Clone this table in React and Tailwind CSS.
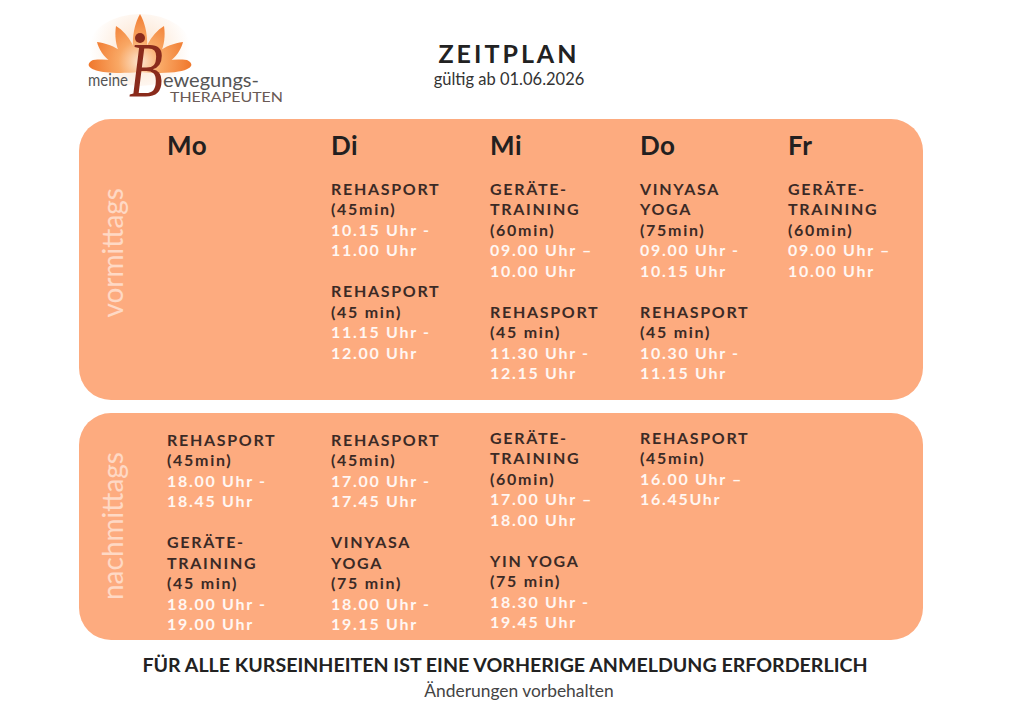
import React from "react";

const morning = [
  { day: "Mo", blocks: [] },
  {
    day: "Di",
    blocks: [
      { t: ["REHASPORT", "(45min)"], h: ["10.15 Uhr -", "11.00 Uhr"] },
      { t: ["REHASPORT", "(45 min)"], h: ["11.15 Uhr -", "12.00 Uhr"] },
    ],
  },
  {
    day: "Mi",
    blocks: [
      { t: ["GERÄTE-", "TRAINING", "(60min)"], h: ["09.00 Uhr –", "10.00 Uhr"] },
      { t: ["REHASPORT", "(45 min)"], h: ["11.30 Uhr -", "12.15 Uhr"] },
    ],
  },
  {
    day: "Do",
    blocks: [
      { t: ["VINYASA", "YOGA", "(75min)"], h: ["09.00 Uhr -", "10.15 Uhr"] },
      { t: ["REHASPORT", "(45 min)"], h: ["10.30 Uhr -", "11.15 Uhr"] },
    ],
  },
  {
    day: "Fr",
    blocks: [{ t: ["GERÄTE-", "TRAINING", "(60min)"], h: ["09.00 Uhr –", "10.00 Uhr"] }],
  },
];

const afternoon = [
  {
    day: "Mo",
    blocks: [
      { t: ["REHASPORT", "(45min)"], h: ["18.00 Uhr -", "18.45 Uhr"] },
      { t: ["GERÄTE-", "TRAINING", "(45 min)"], h: ["18.00 Uhr -", "19.00 Uhr"] },
    ],
  },
  {
    day: "Di",
    blocks: [
      { t: ["REHASPORT", "(45min)"], h: ["17.00 Uhr -", "17.45 Uhr"] },
      { t: ["VINYASA", "YOGA", "(75 min)"], h: ["18.00 Uhr -", "19.15 Uhr"] },
    ],
  },
  {
    day: "Mi",
    up: true,
    blocks: [
      { t: ["GERÄTE-", "TRAINING", "(60min)"], h: ["17.00 Uhr –", "18.00 Uhr"] },
      { t: ["YIN YOGA", "(75 min)"], h: ["18.30 Uhr -", "19.45 Uhr"] },
    ],
  },
  {
    day: "Do",
    up: true,
    blocks: [{ t: ["REHASPORT", "(45min)"], h: ["16.00 Uhr –", "16.45Uhr"] }],
  },
  { day: "Fr", blocks: [] },
];

const Logo = () => (
  <svg width="205" height="96" viewBox="0 0 205 96" className="ml-[85px] mt-[10px]">
    <defs>
      <radialGradient id="lotus" cx="55" cy="52" r="54" gradientUnits="userSpaceOnUse">
        <stop offset="0" stopColor="#fde6d0" />
        <stop offset="0.4" stopColor="#f9a865" />
        <stop offset="1" stopColor="#ef7327" />
      </radialGradient>
      <radialGradient id="glow" cx="55" cy="40" r="50" gradientUnits="userSpaceOnUse">
        <stop offset="0" stopColor="#fbd3b0" stopOpacity="0.7" />
        <stop offset="1" stopColor="#fbd3b0" stopOpacity="0" />
      </radialGradient>
    </defs>
    <ellipse cx="55" cy="40" rx="52" ry="36" fill="url(#glow)" />
    <g fill="url(#lotus)">
      <path d="M55,62 C8,66 -4,56 8,50 C26,48 44,52 55,62Z" />
      <path d="M55,62 C102,66 114,56 102,50 C84,48 66,52 55,62Z" />
      <path d="M55,62 C32,60 16,48 12,32 C30,34 46,46 55,62Z" />
      <path d="M55,62 C78,60 94,48 98,32 C80,34 64,46 55,62Z" />
      <path d="M55,62 C36,54 28,36 31,16 C44,24 53,40 55,62Z" />
      <path d="M55,62 C74,54 82,36 79,16 C66,24 57,40 55,62Z" />
      <path d="M55,62 C45,44 46,20 55,4 C64,20 65,44 55,62Z" />
    </g>
    <circle cx="55" cy="28" r="5" fill="#8a2b1c" />
    <text x="3" y="76" fontSize="17" fill="#555" fontFamily="Lato, sans-serif" textLength="40" lengthAdjust="spacingAndGlyphs">
      meine
    </text>
    <text x="44" y="86" fontSize="78" fill="#8a2b1c" fontStyle="italic" fontFamily="'Liberation Serif', serif" textLength="34" lengthAdjust="spacingAndGlyphs">
      B
    </text>
    <text x="78" y="77" fontSize="19" fill="#555" fontFamily="Lato, sans-serif" textLength="96" lengthAdjust="spacingAndGlyphs">
      ewegungs-
    </text>
    <text x="85" y="92" fontSize="13" fill="#6a5a55" fontFamily="Lato, sans-serif" textLength="113" lengthAdjust="spacingAndGlyphs">
      THERAPEUTEN
    </text>
  </svg>
);

const Block = ({ b, first }) => (
  <div className={first ? "" : "mt-[20.5px]"}>
    {b.t.map((l) => (
      <div key={l} className="text-[#3b2a26]">
        {l}
      </div>
    ))}
    {b.h.map((l) => (
      <div key={l} className="text-white/90">
        {l}
      </div>
    ))}
  </div>
);

const Panel = ({ label, cols, heads, className, labelClass }) => (
  <div className={"flex rounded-[32px] bg-[#fdab7f] ml-[79px] w-[844px] " + className}>
    <div className={"w-[66px] flex items-center justify-center " + labelClass}>
      <span className="[writing-mode:vertical-rl] rotate-180 text-[28px] text-white/55 leading-none">
        {label}
      </span>
    </div>
    <div className="ml-[22px] grid grid-cols-[164px_159px_150px_148px_1fr]">
      {cols.map((c) => (
        <div key={c.day} className={c.up ? "-mt-[2px]" : ""}>
          {heads && (
            <div className="text-[26px] leading-[30px] font-bold text-[#231f20] tracking-[0.5px] mb-[18.5px]">
              {c.day}
            </div>
          )}
          <div className="text-[16px] leading-[20.5px] font-bold tracking-[1.7px]">
            {c.blocks.map((b, i) => (
              <Block key={i} b={b} first={i === 0} />
            ))}
          </div>
        </div>
      ))}
    </div>
  </div>
);

export default function App() {
  return (
    <div className="w-[1024px] h-[724px] bg-white font-['Lato',sans-serif] overflow-hidden">
      <div className="h-[119px] grid grid-cols-3">
        <div>
          <Logo />
        </div>
        <div className="pt-[38px] text-center pr-[6px]">
          <div className="text-[25px] leading-[30px] font-bold tracking-[3px] text-[#222]">ZEITPLAN</div>
          <div className="text-[16.5px] leading-[20px] mt-[1px] text-[#333]">gültig ab 01.06.2026</div>
        </div>
        <div />
      </div>

      <Panel label="vormittags" cols={morning} heads className="h-[281px] pt-[11px]" labelClass="-mt-[11px] pb-[14px]" />
      <Panel label="nachmittags" cols={afternoon} className="h-[227px] pt-[16.5px] mt-[13px]" labelClass="-mt-[16.5px]" />

      <div className="ml-[79px] w-[852px] text-center mt-[13px]">
        <div className="text-[19.6px] leading-[24px] font-bold text-[#222]">
          FÜR ALLE KURSEINHEITEN IST EINE VORHERIGE ANMELDUNG ERFORDERLICH
        </div>
        <div className="text-[17.4px] leading-[20px] text-[#444] pl-[28px] mt-[4px]">Änderungen vorbehalten</div>
      </div>
    </div>
  );
}
